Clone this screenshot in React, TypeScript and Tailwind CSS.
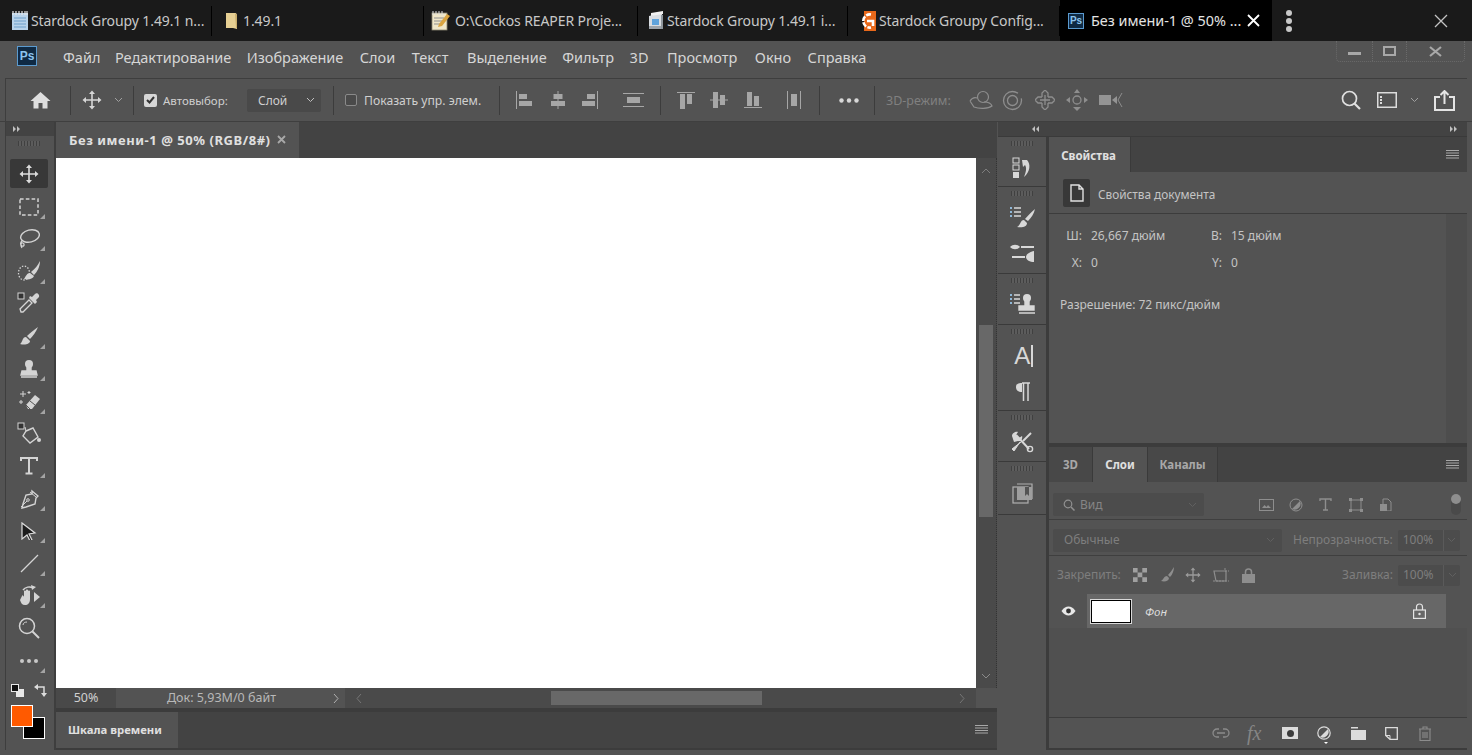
import type { ReactNode } from 'react';

const SANS = "font-['Noto_Sans',sans-serif]";

function Ic({ w = 20, h, vb, className = '', children }: { w?: number; h?: number; vb?: string; className?: string; children: ReactNode }) {
  const hh = h ?? w;
  return (
    <svg width={w} height={hh} viewBox={vb ?? `0 0 ${w} ${hh}`} className={`shrink-0 ${className}`} fill="none">
      {children}
    </svg>
  );
}

// ---- shared glyphs
const MoveGlyph = ({ c = '#d6d6d6', s = 20 }: { c?: string; s?: number }) => (
  <Ic w={s} vb="0 0 20 20">
    <path d="M10 2v16M2 10h16" stroke={c} strokeWidth="1.6" />
    <path d="M10 0.5l3 3.5H7zM10 19.5l3-3.5H7zM0.5 10L4 7v6zM19.5 10L16 7v6z" fill={c} />
  </Ic>
);

const Hamburger = () => (
  <Ic w={13} h={10}>
    <path d="M0 .5h13M0 3h13M0 5.5h13M0 8h13" stroke="#a8a8a8" strokeWidth="1.2" />
  </Ic>
);

const Chevron = ({ c = '#a0a0a0' }: { c?: string }) => (
  <Ic w={9} h={6}>
    <path d="M1 1l3.5 3.5L8 1" stroke={c} strokeWidth="1" />
  </Ic>
);

const Grip = () => (
  <div className="h-[5px] w-[22px] shrink-0 bg-[repeating-linear-gradient(90deg,#404040_0_1px,#5c5c5c_1px_3px)]" />
);

// ---- taskbar icons
const NotepadIcon = () => (
  <Ic w={20} h={22}>
    <rect x="2" y="3" width="16" height="17" fill="#b9d3ea" />
    <path d="M4 8h12M4 11h12M4 14h12M4 17h12" stroke="#6f9fc9" strokeWidth="1" />
    <path d="M3 1v4M6 1v4M9 1v4M12 1v4M15 1v4M17 1v4" stroke="#e8e8e8" strokeWidth="1.2" />
  </Ic>
);
const FolderIcon = () => (
  <Ic w={14} h={18}>
    <path d="M1 1h10l1 2v14l-4-1H1z" fill="#e6cf93" />
    <path d="M10 1l2 2v13h-1z" fill="#c8ac6a" />
  </Ic>
);
const MemoIcon = () => (
  <Ic w={20} h={22}>
    <rect x="1" y="3" width="15" height="17" fill="#efe6c8" stroke="#8a8470" strokeWidth=".8" />
    <path d="M3 8h10M3 11h10M3 14h7" stroke="#8f8f8f" strokeWidth="1" />
    <path d="M8 14l8-10 3 2-8 10-4 1z" fill="#d9a441" />
    <path d="M2 1v4M5 1v4M8 1v4M11 1v4" stroke="#ddd" strokeWidth="1" />
  </Ic>
);
const InstallerIcon = () => (
  <Ic w={18} h={22}>
    <path d="M2 6l13-3v16H2z" fill="#d9dde2" />
    <path d="M4 3l12-2v3L4 6z" fill="#f1f1f1" />
    <rect x="5" y="9" width="7" height="6" fill="#5fa3dc" />
    <rect x="2" y="16" width="13" height="3" fill="#9da4ab" />
    <path d="M14 5h2v14h-2z" fill="#8f979e" />
  </Ic>
);
const GroupyIcon = () => (
  <Ic w={20} h={20}>
    <rect x="8" y="0" width="12" height="20" fill="#e8681a" />
    <path d="M15 3.5A6.6 6.6 0 1 0 15 16.5" stroke="#fff" strokeWidth="2.6" strokeDasharray="5 1.4" />
    <path d="M11 10h6v5" stroke="#fff" strokeWidth="2.6" />
  </Ic>
);
const PsBadge = ({ s = 16, fs = 'text-[10px]' }: { s?: number; fs?: string }) => (
  <div
    style={{ width: s, height: s }}
    className={`flex shrink-0 items-center justify-center border border-[#5b9bd0] bg-[#0f2a44] font-bold ${fs} leading-none text-[#8cc4ee] font-['Liberation_Sans',sans-serif]`}
  >
    Ps
  </div>
);

// ---- toolbar (left column) icons
const C = '#d4d4d4';
const tools: { el: ReactNode; fly?: boolean }[] = [
  { el: <MoveGlyph c="#dcdcdc" /> },
  { el: <Ic w={20}><rect x="1" y="2" width="18" height="16" stroke={C} strokeWidth="1.5" strokeDasharray="3.6 2.2" /></Ic>, fly: true },
  { el: <Ic w={22}><ellipse cx="12" cy="8" rx="9.5" ry="6" transform="rotate(-14 12 8)" stroke={C} strokeWidth="1.4" /><path d="M5 12c-3 2-3 5-1 6s3-2 1-3-3 2-1 5" stroke={C} strokeWidth="1.3" /></Ic>, fly: true },
  { el: <Ic w={24}><ellipse cx="7" cy="13" rx="5.5" ry="7" stroke={C} strokeWidth="1.3" strokeDasharray="1.4 1.6" /><path d="M23 1c-2 4-5 8-9 11l3 3c3-3 6-8 6-14zM13 13c-3 0-4 3-6 6 4 1 9 0 10-3z" fill={C} /></Ic>, fly: true },
  { el: <Ic w={24}><rect x="1" y="1" width="6" height="6" fill="#333" stroke={C} /><path d="M4 20l-1-3 9-9 3 3-9 9z" stroke={C} strokeWidth="1.3" /><path d="M12 6l6 6 2-2-1-2 3-3c1-2-2-5-4-3l-3 3-2-1z" fill={C} /></Ic> },
  { el: <Ic w={20}><path d="M19 1C17 6 14 10 11 13L8 10C11 7 15 4 19 1zM7 11C3 11 4 16 1 18C6 19.500 11 18 11 15z" fill={C} /></Ic>, fly: true },
  { el: <Ic w={20}><circle cx="10" cy="5" r="4" fill={C} /><path d="M8 8h4v4h5l1 4H2l1-4h5zM2 18h16" stroke={C} strokeWidth="1.4" fill={C} /></Ic>, fly: true },
  { el: <Ic w={24}><path d="M9 16l9-10 5 4-8 10h-4z" fill={C} /><path d="M9 16l4 4M13 12l5 4" stroke="#535353" strokeWidth="1" /><path d="M6 2v6M3 5h6M2 13h4M4 11v4M12 2v3M10.5 3.5h3" stroke={C} strokeWidth="1" /></Ic>, fly: true },
  { el: <Ic w={24}><rect x="1" y="1" width="6" height="6" fill="#333" stroke={C} /><path d="M9 9l7-3 5 9-8 6-7-7z" stroke={C} strokeWidth="1.4" /><path d="M9 9l-1-4" stroke={C} /><circle cx="22" cy="18" r="2" fill={C} /></Ic> },
  { el: <Ic w={18}><path d="M1 4V1h16v3M9 1v15M5.5 16.5h7" stroke={C} strokeWidth="2" /></Ic>, fly: true },
  { el: <Ic w={20}><path d="M13 2l6 5-2 2-1 6-9 3-4 1 1-4 3-9 6-1z" stroke={C} strokeWidth="1.4" /><path d="M11 3l6 5M2 18l6-6" stroke={C} /><circle cx="9" cy="11" r="1.3" stroke={C} /></Ic>, fly: true },
  { el: <Ic w={18}><path d="M2 1l13 10-6 1 3 6-2 1-3-6-5 4z" fill="#1c1c1c" stroke="#dcdcdc" strokeWidth="1.2" /></Ic>, fly: true },
  { el: <Ic w={19}><path d="M1 18L18 1" stroke={C} strokeWidth="1.2" /></Ic>, fly: true },
  { el: <Ic w={23}><path d="M5 6c2-3 7-4 10-2" stroke={C} strokeWidth="1.4" /><path d="M13 1l5 2-4 3z" fill={C} /><path d="M16 8l6 5-6 5zM4 12c0-2 2 0 2 1V7c1-1 2 0 2 0v5V6c1-1 2 0 2 0v6-5c1-1 2 0 2 0v8c0 4-2 6-5 6-3 0-4-2-5-5z" fill={C} /></Ic>, fly: true },
  { el: <Ic w={22}><circle cx="9" cy="9" r="7.5" stroke={C} strokeWidth="1.5" /><path d="M14.5 14.5L21 21" stroke={C} strokeWidth="2" /><path d="M5 8c0-2 2-3 4-3" stroke={C} strokeWidth="1" /></Ic> },
  { el: <Ic w={20} h={6}><circle cx="3" cy="3" r="2" fill="#c8c8c8" /><circle cx="10" cy="3" r="2" fill="#c8c8c8" /><circle cx="17" cy="3" r="2" fill="#c8c8c8" /></Ic>, fly: true },
];

function ToolItem({ el, fly, active }: { el: ReactNode; fly?: boolean; active?: boolean }) {
  return (
    <div className="relative flex h-[32.45px] w-full items-center justify-center pr-[2px]">
      {active && <div className="absolute left-[4px] right-[6px] top-[1px] h-[29px] rounded-[2px] bg-[#383838]" />}
      <div className="relative flex items-center justify-center">{el}</div>
      {fly && <div className="absolute bottom-[4px] right-[9px] h-0 w-0 border-b-[5px] border-l-[5px] border-b-[#a4a4a4] border-l-transparent" />}
    </div>
  );
}

// ---- right dock column icons
const D = '#d8d8d8';
const dockGroups: ReactNode[][] = [
  [<Ic w={20} h={22}><rect x="1" y="1" width="6" height="5" stroke={D} /><rect x="1" y="8" width="6" height="5" stroke={D} /><rect x="1" y="15" width="6" height="6" fill={D} /><path d="M10 3h5c4 4 3 12-3 17 2-5 3-9 1-12l-2 2z" fill={D} /></Ic>],
  [
    <Ic w={27} h={24}><path d="M1 2h2M1 6h2M1 10h2" stroke="#8fb8d8" strokeWidth="2" /><path d="M5 2h7M5 6h7M5 10h7" stroke={D} strokeWidth="1.4" /><path d="M26 3c-4 3-7 7-10 10l3 2c3-3 6-7 7-12zM15 14c-4 0-3 5-7 7 5 1 10 0 10-4z" fill={D} /></Ic>,
    <Ic w={26} h={20}><path d="M1 4c3-3 7-3 10 0-3 3-7 3-10 0z" fill={D} /><path d="M12 4h13M3 14h13" stroke={D} strokeWidth="2" /><path d="M25 8v11c-4 0-8-2-8-5 0-3 4-5 8-6z" fill={D} /></Ic>,
  ],
  [<Ic w={26} h={24}><path d="M1 2h2M1 6h2M1 10h2" stroke="#8fb8d8" strokeWidth="2" /><path d="M5 2h6M5 6h6M5 10h6" stroke={D} strokeWidth="1.4" /><circle cx="18" cy="5" r="4" fill={D} /><path d="M16 8h4v5h5v4H10v-4h6zM10 20h16" stroke={D} fill={D} strokeWidth="1.4" /></Ic>],
  [
    <div className="ml-[3px] flex items-center"><span className="text-[24px] leading-none text-[#d8d8d8] font-['Liberation_Sans',sans-serif]">A</span><div className="ml-[1px] h-[22px] w-[1.5px] bg-[#d8d8d8]" /></div>,
    <Ic w={15} h={19}><path d="M7 1v9C3 10 1 8 1 5s2-4 6-4z" fill={D} /><path d="M7 1h8M8.5 1v18M13 1v18" stroke={D} strokeWidth="1.5" /></Ic>,
  ],
  [<Ic w={24}><path d="M2 6c0-3 4-5 6-4L6 5l3 3 3-2c1 2-1 6-4 5l-4 1z" fill={D} /><path d="M10 12l-6 9-2-2 9-7" fill={D} stroke={D} /><path d="M6 5l13 14" stroke={D} strokeWidth="2" /><path d="M21 3l-8 8" stroke={D} strokeWidth="2" /><circle cx="20" cy="19" r="2.6" stroke={D} strokeWidth="1.4" /></Ic>],
  [<Ic w={21}><rect x="1" y="4" width="15" height="16" stroke="#b0b0b0" strokeWidth="1.2" /><path d="M5 1h15v15" stroke="#b0b0b0" strokeWidth="1.2" /><rect x="5" y="4" width="15" height="13" fill="#9e9e9e" /><path d="M13 4h4v9l-2-2-2 2z" fill="#535353" /></Ic>],
];
// heights taken from the separators between groups
const dockHeights = ['h-[50px]', 'h-[87px]', 'h-[51px]', 'h-[86px]', 'h-[51px]', 'h-[53px]'];

// ---- options bar
const Sep = ({ className = '' }: { className?: string }) => <div className={`h-[29px] w-px shrink-0 bg-[#3c3c3c] ${className}`} />;

const A = '#a6a6a6';
const AlignIcons: { ml: string; w: number; h: number; d: ReactNode }[] = [
  { ml: 'ml-[16px]', w: 16, h: 18, d: <><path d="M.5 0v18" stroke={A} /><rect x="3" y="3" width="8" height="5" fill={A} /><rect x="3" y="10" width="13" height="5" fill={A} /></> },
  { ml: 'ml-[19px]', w: 14, h: 18, d: <><path d="M7 0v18" stroke={A} /><rect x="2.5" y="3" width="9" height="5" fill={A} /><rect x="0" y="10" width="14" height="5" fill={A} /></> },
  { ml: 'ml-[17px]', w: 16, h: 18, d: <><path d="M15.5 0v18" stroke={A} /><rect x="5" y="3" width="8" height="5" fill={A} /><rect x="0" y="10" width="13" height="5" fill={A} /></> },
  { ml: 'ml-[25px]', w: 21, h: 14, d: <><path d="M0 .5h21M0 13.5h21" stroke={A} /><rect x="4" y="4" width="13" height="6" fill={A} /></> },
];
const AlignIcons2: { ml: string; w: number; h: number; d: ReactNode }[] = [
  { ml: 'ml-[16px]', w: 18, h: 17, d: <><path d="M0 .5h18" stroke={A} /><rect x="3" y="2" width="5" height="15" fill={A} /><rect x="10" y="2" width="5" height="10" fill={A} /></> },
  { ml: 'ml-[15px]', w: 18, h: 16, d: <><path d="M0 8h18" stroke={A} /><rect x="3" y="0" width="5" height="16" fill={A} /><rect x="10" y="3" width="5" height="10" fill={A} /></> },
  { ml: 'ml-[16px]', w: 18, h: 16, d: <><path d="M0 15.5h18" stroke={A} /><rect x="3" y="0" width="5" height="14" fill={A} /><rect x="10" y="4" width="5" height="10" fill={A} /></> },
  { ml: 'ml-[25px]', w: 14, h: 18, d: <><path d="M.5 0v18M13.5 0v18" stroke={A} /><rect x="4" y="3" width="6" height="12" fill={A} /></> },
];

function Check({ on }: { on?: boolean }) {
  return on ? (
    <div className="flex h-[13px] w-[13px] shrink-0 items-center justify-center rounded-[2px] bg-[#d6d6d6]">
      <Ic w={9} h={8}><path d="M1 4l2.5 2.5L8 1" stroke="#333" strokeWidth="2" /></Ic>
    </div>
  ) : (
    <div className="h-[12px] w-[12px] shrink-0 rounded-[2px] border border-[#8a8a8a] bg-[#4a4a4a]" />
  );
}

function PanelTab({ label, active, w, dim }: { label: string; active?: boolean; w: string; dim?: boolean }) {
  return (
    <div className={`flex h-full shrink-0 items-center justify-center border-r border-[#3a3a3a] ${w} ${active ? 'bg-[#535353] text-[#e0e0e0]' : dim ? 'bg-[#484848] text-[#a8a8a8]' : 'bg-[#484848] text-[#b4b4b4]'} text-[11.5px] font-bold`}>
      {label}
    </div>
  );
}

const taskTabs = [
  { icon: <NotepadIcon />, title: 'Stardock Groupy 1.49.1 n...', w: 'w-[212px]', ml: 'ml-[8px]', tx: 'ml-[0px]' },
  { icon: <FolderIcon />, title: '1.49.1', w: 'w-[212px]', ml: 'ml-[8px]', tx: 'ml-[0px]' },
  { icon: <MemoIcon />, title: 'O:\\Cockos REAPER Proje...', w: 'w-[214px]', ml: 'ml-[5px]', tx: 'ml-[3px]' },
  { icon: <InstallerIcon />, title: 'Stardock Groupy 1.49.1 i...', w: 'w-[210px]', ml: 'ml-[6px]', tx: 'ml-[0px]' },
  { icon: <GroupyIcon />, title: 'Stardock Groupy Config...', w: 'w-[212px]', ml: 'ml-[6px]', tx: 'ml-[2px]' },
];

// gaps differ per item, read off the reference
const menu = [
  { t: 'Файл', ml: '' },
  { t: 'Редактирование', ml: 'ml-[14.5px]' },
  { t: 'Изображение', ml: 'ml-[15.5px]' },
  { t: 'Слои', ml: 'ml-[16.5px]' },
  { t: 'Текст', ml: 'ml-[16.5px]' },
  { t: 'Выделение', ml: 'ml-[18.5px]' },
  { t: 'Фильтр', ml: 'ml-[15.5px]' },
  { t: '3D', ml: 'ml-[15.5px]' },
  { t: 'Просмотр', ml: 'ml-[18.5px]' },
  { t: 'Окно', ml: 'ml-[17.5px]' },
  { t: 'Справка', ml: 'ml-[16.5px]' },
];

export default function App() {
  return (
    <div className={`flex h-[755px] w-[1472px] flex-col overflow-hidden bg-[#535353] ${SANS}`}>
      {/* Groupy tab strip */}
      <div className="flex h-[41px] shrink-0 items-center bg-[#1a1a1a] text-[14px] text-[#c8c8c8]">
        {taskTabs.map((t) => (
          <div key={t.title} className={`flex h-[30px] shrink-0 items-center border-r border-[#000] ${t.w}`}>
            <div className={`flex w-[23px] justify-center ${t.ml}`}>{t.icon}</div>
            <span className={`whitespace-nowrap tracking-[-0.1px] ${t.tx}`}>{t.title}</span>
          </div>
        ))}
        <div className="flex h-full w-[212px] shrink-0 items-center bg-black text-[14.4px] text-[#e4e4e4]">
          <div className="ml-[8px]"><PsBadge /></div>
          <span className="ml-[7px] whitespace-nowrap">Без имени-1 @ 50% ...</span>
          <Ic w={13} className="ml-[6px]"><path d="M1 1l11 11M12 1L1 12" stroke="#fff" strokeWidth="1.8" /></Ic>
        </div>
        <div className="ml-[14px] flex flex-col gap-[2px]">
          <div className="h-[6px] w-[6px] rounded-full bg-[#c8c8c8]" />
          <div className="h-[6px] w-[6px] rounded-full bg-[#c8c8c8]" />
          <div className="h-[6px] w-[6px] rounded-full bg-[#c8c8c8]" />
        </div>
        <Ic w={14} className="ml-[142px]"><path d="M1 1l12 12M13 1L1 13" stroke="#c4c4c4" strokeWidth="1.3" /></Ic>
      </div>

      {/* menu bar */}
      <div className="flex h-[37px] shrink-0 items-center pl-[17px] text-[14.5px] text-[#d6d6d6]">
        <div className="-translate-y-[4px]"><PsBadge s={20} fs="text-[12px]" /></div>
        <div className="ml-[26px] flex -translate-y-[2px]">
          {menu.map((m) => (
            <span key={m.t} className={`whitespace-nowrap ${m.ml}`}>{m.t}</span>
          ))}
        </div>
        <div className="ml-auto mr-[7px] flex h-[21px] w-[129px] self-start rounded-b-[4px] border-x border-b border-dotted border-[#6a6a6a]">
          <div className="flex w-[36px] items-center justify-center border-r border-dotted border-[#6a6a6a]">
            <div className="mt-[4px] h-[3px] w-[13px] bg-[#a8a8a8]" />
          </div>
          <div className="flex w-[34px] items-center justify-center border-r border-dotted border-[#6a6a6a]">
            <div className="h-[10px] w-[13px] border-2 border-[#a8a8a8]" />
          </div>
          <div className="flex flex-1 items-center justify-center">
            <Ic w={13} h={11}><path d="M1 1l11 9M12 1L1 10" stroke="#a8a8a8" strokeWidth="2.2" /></Ic>
          </div>
        </div>
      </div>

      {/* options bar */}
      <div className="mx-[5px] flex h-[43px] shrink-0 items-center border-l border-t border-[#3e3e3e] text-[12px] text-[#cfcfcf]">
        <div className="ml-[24px] flex w-[20px] justify-center">
          <Ic w={21} h={18}><path d="M10.5 1L.5 10h3v7.5h5V12h4v5.5h5V10h3z" fill="#dedede" /></Ic>
        </div>
        <Sep className="ml-[20px]" />
        <div className="ml-[11px]"><MoveGlyph s={20} /></div>
        <div className="ml-[12px]"><Chevron /></div>
        <Sep className="ml-[10px]" />
        <div className="ml-[10px]"><Check on /></div>
        <span className="ml-[6px] w-[65px] whitespace-nowrap pt-[2px] text-[11.5px]">Автовыбор:</span>
        <div className="ml-[19px] flex h-[23px] w-[74px] items-center justify-between rounded-[2px] bg-[#494949] pl-[11px] pr-[6px]">
          <span className="pt-[2px]">Слой</span>
          <Chevron c="#c0c0c0" />
        </div>
        <Sep className="ml-[12px]" />
        <div className="ml-[11px]"><Check /></div>
        <span className="ml-[7px] w-[117px] whitespace-nowrap pt-[2px] text-[12.2px]">Показать упр. элем.</span>
        <Sep className="ml-[18px]" />
        {AlignIcons.map((a, i) => (
          <Ic key={i} w={a.w} h={a.h} className={a.ml}>{a.d}</Ic>
        ))}
        <Sep className="ml-[16px]" />
        {AlignIcons2.map((a, i) => (
          <Ic key={i} w={a.w} h={a.h} className={a.ml}>{a.d}</Ic>
        ))}
        <Sep className="ml-[18px]" />
        <Ic w={20} h={5} className="ml-[19px]"><circle cx="2.5" cy="2.5" r="2.2" fill="#d8d8d8" /><circle cx="10" cy="2.5" r="2.2" fill="#d8d8d8" /><circle cx="17.5" cy="2.5" r="2.2" fill="#d8d8d8" /></Ic>
        <Sep className="ml-[15px]" />
        <span className="ml-[11px] w-[65px] whitespace-nowrap pt-[2px] text-[12.5px] text-[#808080]">3D-режим:</span>
        <Ic w={24} h={20} className="ml-[18px]"><circle cx="14" cy="7" r="5.5" stroke="#8e8e8e" strokeWidth="1.2" /><path d="M1 11c2-3 4-4 7-3M1 11l4 6c5 2 14 2 18-1-1-3-5-4-8-4" stroke="#8e8e8e" strokeWidth="1.2" /></Ic>
        <Ic w={21} className="ml-[9px]"><circle cx="10.5" cy="10.5" r="9" stroke="#8e8e8e" strokeWidth="1.3" strokeDasharray="48 6" /><circle cx="10.5" cy="10.5" r="5" stroke="#8e8e8e" strokeWidth="1.3" /></Ic>
        <Ic w={20} className="ml-[12px]"><path d="M7 7V3l3-3 3 3v4M7 13v4l3 3 3-3v-4M7 7H3l-3 3 3 3h4M13 7h4l3 3-3 3h-4" stroke="#8e8e8e" strokeWidth="1.3" /><path d="M10 5v10M5 10h10" stroke="#8e8e8e" strokeWidth="1.3" /></Ic>
        <Ic w={22} className="ml-[11px]"><circle cx="11" cy="11" r="4" stroke="#8e8e8e" strokeWidth="1.3" /><path d="M11 0l3 4H8zM0 11l4-3v6zM22 11l-4-3v6zM11 22l4-4H7z" fill="#8e8e8e" /></Ic>
        <Ic w={24} h={16} className="ml-[11px]"><rect x="0" y="3" width="12" height="10" fill="#949494" /><path d="M13 8l5-4v8z" fill="#949494" /><path d="M23 1l-4 7 4 7" stroke="#8e8e8e" strokeWidth="1" /></Ic>
        <Ic w={20} className="ml-[218px]"><circle cx="8.5" cy="8.5" r="7" stroke="#e0e0e0" strokeWidth="1.7" /><path d="M13.5 13.5L19 19" stroke="#e0e0e0" strokeWidth="2.2" /></Ic>
        <Ic w={20} h={16} className="ml-[16px]"><rect x=".75" y=".75" width="18.5" height="14.5" stroke="#dcdcdc" strokeWidth="1.5" /><path d="M4 4v8" stroke="#dcdcdc" strokeWidth="2" strokeDasharray="2 1" /></Ic>
        <div className="ml-[13px]"><Chevron /></div>
        <Ic w={21} h={21} className="ml-[15px]"><path d="M6 7H1v13h19V7h-5" stroke="#e4e4e4" strokeWidth="2" /><path d="M10.5 14V2M6.5 5l4-4 4 4" stroke="#e4e4e4" strokeWidth="2" /></Ic>
      </div>

      {/* workspace */}
      <div className="flex min-h-0 flex-1 border-t border-[#3f3f3f] pb-[5px] pl-[5px] pr-[5px]">
        {/* tools */}
        <div className="flex w-[51px] shrink-0 flex-col border-l border-r-2 border-[#3e3e3e]">
          <div className="flex h-[14px] shrink-0 items-center bg-[#434343] pl-[7px]">
            <Ic w={8} h={6}><path d="M0 0l3 3-3 3zM4 0l3 3-3 3z" fill="#c0c0c0" /></Ic>
          </div>
          <div className="flex h-[22px] shrink-0 items-center justify-center pb-[10px] pr-[2px] pt-[3px]"><Grip /></div>
          {tools.map((t, i) => (
            <ToolItem key={i} el={t.el} fly={t.fly} active={i === 0} />
          ))}
          <div className="mt-[7px] flex items-center justify-between px-[5px]">
            <Ic w={13}><rect x="5" y="5" width="8" height="8" fill="#e8e8e8" /><rect x=".5" y=".5" width="7" height="7" fill="#111" stroke="#e8e8e8" /></Ic>
            <Ic w={13} className="mr-[2px]"><path d="M2 3h8v8" stroke="#dcdcdc" strokeWidth="1.5" /><path d="M4 0v6L0 3zM7 9h6l-3 4z" fill="#dcdcdc" /></Ic>
          </div>
          <div className="relative mt-[8px] h-[34px]">
            <div className="absolute left-[17px] top-[12px] h-[22px] w-[22px] border border-white bg-black" />
            <div className="absolute left-[5px] top-0 h-[22px] w-[22px] border border-white bg-[#ff5a00]" />
          </div>
        </div>

        {/* document area */}
        <div className="flex w-[941px] shrink-0 flex-col">
          <div className="flex h-[36px] shrink-0 bg-[#434343]">
            <div className="flex w-[243px] items-center bg-[#535353] pl-[13px] pt-[2px] text-[13px] font-bold tracking-[0.55px] text-[#e0e0e0]">
              <span className="whitespace-nowrap">Без имени-1 @ 50% (RGB/8#)</span>
              <Ic w={9} className="ml-[6px] -translate-y-[2px]"><path d="M1 1l7 7M8 1L1 8" stroke="#a8a8a8" strokeWidth="1.8" /></Ic>
            </div>
          </div>
          <div className="flex h-[530px] shrink-0">
            <div className="w-[920px] bg-white" />
            <div className="flex flex-1 flex-col items-center border-r border-dotted border-[#333] bg-[#4a4a4a] pb-[9px] pt-[10px]">
              <Ic w={10} h={6}><path d="M1 5l4-4 4 4" stroke="#7e7e7e" strokeWidth="1" /></Ic>
              <div className="mt-[151px] h-[192px] w-[14px] bg-[#686868]" />
              <Ic w={10} h={6} className="mt-auto"><path d="M1 1l4 4 4-4" stroke="#8a8a8a" strokeWidth="1" /></Ic>
            </div>
          </div>
          <div className="flex h-[20px] shrink-0 items-center text-[12.5px] text-[#c0c0c0]">
            <div className="flex h-full w-[60px] items-center justify-center bg-[#494949] text-[#d0d0d0]">50%</div>
            <div className="flex h-full w-[229px] items-center bg-[#535353] pl-[51px] text-[#b8b8b8]">
              <span className="whitespace-nowrap">Док: 5,93M/0 байт</span>
              <Ic w={6} h={11} className="ml-auto mr-[6px]"><path d="M1 1l4 4.5L1 10" stroke="#b0b0b0" /></Ic>
            </div>
            <div className="flex h-full w-[631px] items-center bg-[#4a4a4a] px-[11px]">
              <Ic w={6} h={11}><path d="M5 1L1 5.5 5 10" stroke="#767676" /></Ic>
              <div className="ml-[189px] h-[14px] w-[211px] bg-[#686868]" />
              <Ic w={6} h={11} className="ml-auto"><path d="M1 1l4 4.5L1 10" stroke="#767676" /></Ic>
            </div>
            <div className="h-full flex-1 bg-[#535353]" />
          </div>
          <div className="h-[4px] shrink-0 bg-[#3c3c3c]" />
          <div className="flex h-[36px] shrink-0 bg-[#434343]">
            <div className="flex w-[122px] items-center bg-[#535353] pl-[12px] text-[11.3px] font-bold text-[#e0e0e0]">Шкала времени</div>
            <div className="ml-auto mr-[9px] flex items-center"><Hamburger /></div>
          </div>
          <div className="h-[2px] shrink-0 bg-[#3c3c3c]" />
        </div>

        {/* right dock */}
        <div className="ml-[1px] flex min-w-0 flex-1 flex-col">
          <div className="flex h-[14px] shrink-0 items-center justify-between bg-[#434343] pl-[34px] pr-[9px]">
            <Ic w={8} h={6}><path d="M3 0L0 3l3 3zM7 0L4 3l3 3z" fill="#c0c0c0" /></Ic>
            <Ic w={8} h={6}><path d="M0 0l3 3-3 3zM4 0l3 3-3 3z" fill="#c0c0c0" /></Ic>
          </div>
          <div className="flex min-h-0 flex-1 border-t border-[#3a3a3a]">
            {/* collapsed panel icons */}
            <div className="flex w-[48px] shrink-0 flex-col">
              {dockGroups.map((g, i) => (
                <div key={i} className={`flex shrink-0 flex-col items-center border-b border-[#3a3a3a] pt-[4px] ${dockHeights[i]}`}>
                  <Grip />
                  {g.map((el, j) => (
                    <div key={j} className={`flex h-[26px] items-center ${j === 0 ? 'mt-[9px]' : 'mt-[9px]'}`}>{el}</div>
                  ))}
                </div>
              ))}
            </div>
            <div className="w-[3px] shrink-0 bg-[#3c3c3c]" />

            {/* panels */}
            <div className="flex min-w-0 flex-1 flex-col">
              {/* properties */}
              <div className="flex h-[306px] shrink-0 flex-col">
                <div className="flex h-[35px] shrink-0 bg-[#434343]">
                  <PanelTab label="Свойства" active w="w-[82px] pt-[2px] pr-[2px]" />
                  <div className="ml-auto mr-[8px] flex items-center"><Hamburger /></div>
                </div>
                <div className="flex h-[42px] shrink-0 items-center border-b border-[#3c3c3c] pl-[14px] text-[11.8px] text-[#c4c4c4]">
                  <div className="flex h-[28px] w-[27px] items-center justify-center rounded-[2px] bg-[#383838]">
                    <Ic w={14} h={18}><path d="M1 1h8l4 4v12H1zM9 1v4h4" stroke="#e0e0e0" strokeWidth="1.4" /></Ic>
                  </div>
                  <span className="ml-[8px] translate-y-[2px]">Свойства документа</span>
                </div>
                <div className="flex min-h-0 flex-1 text-[12px] leading-[18px] text-[#c4c4c4]">
                  <div className="min-w-0 flex-1 pl-[11px] pt-[13px]">
                    <div className="grid grid-cols-[22px_120px_20px_1fr] gap-y-[9px]">
                      <span className="text-right">Ш:</span><span className="pl-[9px]">26,667 дюйм</span>
                      <span className="text-right">В:</span><span className="pl-[9px]">15 дюйм</span>
                      <span className="text-right">X:</span><span className="pl-[9px]">0</span>
                      <span className="text-right">Y:</span><span className="pl-[9px]">0</span>
                    </div>
                    <div className="mt-[24px]">Разрешение: 72 пикс/дюйм</div>
                  </div>
                  <div className="w-[21px] shrink-0 bg-[#4d4d4d]" />
                </div>
              </div>
              <div className="h-[4px] shrink-0 bg-[#3c3c3c]" />

              {/* layers */}
              <div className="flex min-h-0 flex-1 flex-col bg-[#505050]">
                <div className="flex h-[35px] shrink-0 bg-[#434343]">
                  <PanelTab label="3D" w="w-[44px]" dim />
                  <PanelTab label="Слои" active w="w-[55px]" />
                  <PanelTab label="Каналы" w="w-[70px]" dim />
                  <div className="ml-auto mr-[8px] flex items-center"><Hamburger /></div>
                </div>
                <div className="flex h-[38px] shrink-0 items-center border-b border-[#3f3f3f] bg-[#535353] pl-[4px] pt-[8px] text-[12px] text-[#858585]">
                  <div className="flex h-[23px] w-[151px] items-center rounded-[2px] bg-[#4c4c4c] pl-[10px] pr-[7px]">
                    <Ic w={12}><circle cx="5" cy="5" r="3.8" stroke="#909090" strokeWidth="1.2" /><path d="M8 8l3.5 3.5" stroke="#909090" strokeWidth="1.5" /></Ic>
                    <span className="ml-[5px]">Вид</span>
                    <div className="ml-auto"><Chevron c="#606060" /></div>
                  </div>
                  <Ic w={15} h={12} className="ml-[55px]"><rect x=".5" y=".5" width="14" height="11" stroke="#8e8e8e" /><path d="M3 9l2.5-3 2 2 1.5-2 3 3z" fill="#8e8e8e" /></Ic>
                  <Ic w={14} className="ml-[15px]"><circle cx="7" cy="7" r="6" stroke="#8e8e8e" /><path d="M3 11L11 3A6 6 0 0 1 3 11z" fill="#8e8e8e" /></Ic>
                  <Ic w={13} className="ml-[16px]"><path d="M1 3V1h11v2M6.5 1v11M4 12h5" stroke="#8e8e8e" strokeWidth="1.4" /></Ic>
                  <Ic w={14} className="ml-[17px]"><rect x="2" y="2" width="10" height="10" stroke="#8e8e8e" /><path d="M0 0h3v3H0zM11 0h3v3h-3zM0 11h3v3H0zM11 11h3v3h-3z" fill="#8e8e8e" /></Ic>
                  <Ic w={13} className="ml-[16px]"><path d="M4 1h5l3 3v9H4z" stroke="#8e8e8e" /><rect x="1" y="6" width="7" height="7" fill="#8e8e8e" /></Ic>
                  <div className="ml-[59px] flex h-[21px] w-[10px] flex-col items-center rounded-full bg-[#4a4a4a]">
                    <div className="h-[10px] w-[10px] rounded-full bg-[#8e8e8e]" />
                  </div>
                </div>
                <div className="flex h-[36px] shrink-0 items-center border-b border-[#3f3f3f] bg-[#535353] pl-[4px] pt-[5px] text-[12px] text-[#7e7e7e]">
                  <div className="flex h-[23px] w-[229px] items-center justify-between rounded-[2px] bg-[#4c4c4c] pl-[11px] pr-[7px]">
                    <span>Обычные</span>
                    <Chevron c="#606060" />
                  </div>
                  <span className="ml-[11px] whitespace-nowrap">Непрозрачность:</span>
                  <div className="ml-[5px] flex h-[21px] w-[62px] items-center rounded-[2px] bg-[#4c4c4c] pl-[5px]">
                    <span className="flex-1">100%</span>
                    <div className="flex h-full w-[17px] items-center justify-center border-l border-[#5a5a5a]"><Chevron c="#606060" /></div>
                  </div>
                </div>
                <div className="flex h-[38px] shrink-0 items-center bg-[#535353] pl-[8px] text-[12px] text-[#7e7e7e]">
                  <span className="whitespace-nowrap">Закрепить:</span>
                  <Ic w={14} className="ml-[12px]"><rect width="14" height="14" fill="#555" /><path d="M0 0h4.6v4.6H0zM9.3 0H14v4.600H9.3zM4.6 4.6h4.7v4.7H4.6zM0 9.3h4.6V14H0zM9.3 9.3H14V14H9.300z" fill="#a0a0a0" /></Ic>
                  <Ic w={16} className="ml-[12px]"><path d="M15 0c-2 3-4 6-6 8l2 2c2-2 4-6 4-10zM8 9c-3 0-3 3-6 5 4 1 8 0 8-3z" fill="#8e8e8e" /></Ic>
                  <div className="ml-[10px]"><MoveGlyph c="#9a9a9a" s={16} /></div>
                  <Ic w={17} h={15} className="ml-[12px]"><path d="M1 3h12v10H3z" stroke="#8e8e8e" strokeWidth="1.2" /><path d="M0 13h16M12 0v3h4" stroke="#8e8e8e" strokeDasharray="2 1" /></Ic>
                  <Ic w={13} h={15} className="ml-[12px]"><path d="M3.5 6V4a3 3 0 0 1 6 0v2" stroke="#8e8e8e" strokeWidth="1.5" /><rect y="6" width="13" height="9" fill="#8e8e8e" /></Ic>
                  <span className="ml-auto whitespace-nowrap pr-[5px]">Заливка:</span>
                  <div className="mr-[7px] flex h-[21px] w-[62px] shrink-0 items-center rounded-[2px] bg-[#4c4c4c] pl-[5px]">
                    <span className="flex-1">100%</span>
                    <div className="flex h-full w-[17px] items-center justify-center border-l border-[#5a5a5a]"><Chevron c="#606060" /></div>
                  </div>
                </div>
                <div className="flex h-[34px] shrink-0 bg-[#535353] pr-[21px]">
                  <div className="flex w-[38px] items-center justify-center">
                    <Ic w={15} h={10}><path d="M.5 5C3 1.5 5 .5 7.5.5S12 1.5 14.5 5C12 8.500 10 9.500 7.500 9.500S3 8.500 .5 5z" fill="#e8e8e8" /><circle cx="7.500" cy="5" r="2.400" fill="#333" /></Ic>
                  </div>
                  <div className="flex flex-1 items-center bg-[#676767] bg-[radial-gradient(#747474_0.6px,transparent_0.6px)] bg-[length:4px_4px] pl-[4px] pr-[20px]">
                    <div className="h-[23px] w-[40px] border border-black bg-white outline outline-1 outline-[#d8d8d8]" />
                    <span className="ml-[14px] pt-[1px] text-[11.5px] italic text-[#dcdcdc]">Фон</span>
                    <Ic w={13} h={16} className="ml-auto"><path d="M3.500 7V4a3 3 0 0 1 6 0v3" stroke="#e4e4e4" strokeWidth="1.200" /><rect x=".6" y="7" width="11.800" height="8.400" stroke="#e4e4e4" strokeWidth="1.200" /><circle cx="6.500" cy="11" r="1.200" fill="#e4e4e4" /></Ic>
                  </div>
                </div>
                <div className="min-h-0 flex-1" />
                <div className="flex h-[31px] shrink-0 items-center border-t border-[#3c3c3c] bg-[#535353] pl-[163px]">
                  <Ic w={18} h={10}><path d="M7 1H5a4 4 0 0 0 0 8h2M11 1h2a4 4 0 0 1 0 8h-2M5 5h8" stroke="#8c8c8c" strokeWidth="1.300" /></Ic>
                  <span className="ml-[17px] w-[17px] font-['Liberation_Serif',serif] text-[20px] italic leading-none text-[#858585]">fx</span>
                  <div className="ml-[18px] flex h-[12px] w-[16px] items-center justify-center bg-[#dcdcdc]"><div className="h-[7px] w-[7px] rounded-full bg-[#3c3c3c]" /></div>
                  <div className="relative ml-[19px]">
                    <Ic w={14}><circle cx="7" cy="7" r="6.200" stroke="#dcdcdc" strokeWidth="1.200" /><path d="M3 11L11 3A6 6 0 0 1 3 11z" fill="#dcdcdc" /></Ic>
                    <div className="absolute -bottom-[4px] left-[7px] h-0 w-0 border-x-[2px] border-t-[2px] border-x-transparent border-t-white" />
                  </div>
                  <Ic w={15} h={13} className="ml-[20px]"><path d="M0 3h15v10H0zM0 0h7v1.500H0z" fill="#dcdcdc" /></Ic>
                  <Ic w={13} className="ml-[19px]"><path d="M.7.7h11.600v11.600H5L.7 8.500z" stroke="#dcdcdc" strokeWidth="1.300" /><path d="M.7 8.500H5v3.800" stroke="#dcdcdc" strokeWidth="1" /></Ic>
                  <Ic w={14} h={15} className="ml-[20px]"><path d="M1 3h12M5 3V1h4v2M2 3v11.500h10V3M5 6v6M7 6v6M9 6v6" stroke="#8c8c8c" strokeWidth="1.100" /></Ic>
                </div>
                <div className="h-[2px] shrink-0 bg-[#3c3c3c]" />
              </div>
            </div>
          </div>
        </div>
      </div>
    </div>
  );
}
